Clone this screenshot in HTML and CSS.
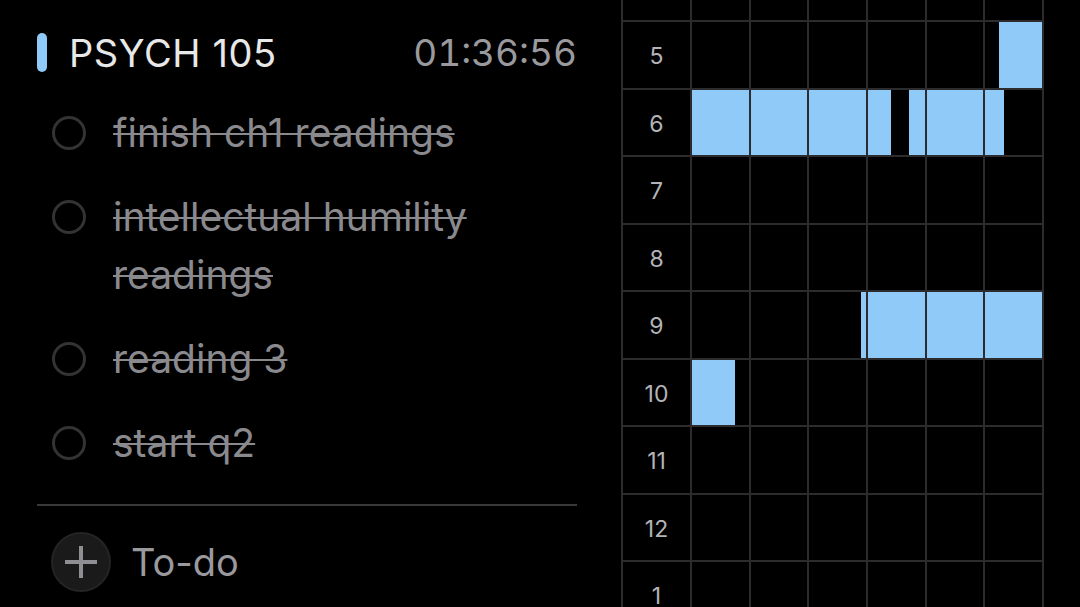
FILE: index.html
```
<!DOCTYPE html>
<html lang="en">
<head>
    <meta charset="UTF-8">
    <meta name="viewport" content="width=device-width, initial-scale=1.0">
    <title>PSYCH 105</title>
    <link rel="stylesheet" href="styles.css">
</head>
<body>
    <div class="app">
        <section class="tasks">
            <div class="task-head">
                <span class="pill"></span>
                <h1 class="title">PSYCH 105</h1>
                <span class="timer">01:36:56</span>
            </div>

            <ul class="todo-list">
                <li class="todo">
                    <span class="check"></span>
                    <span class="todo-text">finish ch1 readings</span>
                </li>
                <li class="todo">
                    <span class="check"></span>
                    <span class="todo-text">intellectual humility readings</span>
                </li>
                <li class="todo">
                    <span class="check"></span>
                    <span class="todo-text">reading 3</span>
                </li>
                <li class="todo">
                    <span class="check"></span>
                    <span class="todo-text">start q2</span>
                </li>
            </ul>

            <div class="divider"></div>

            <div class="add-todo">
                <span class="add-btn">
                    <svg width="34" height="34" viewBox="0 0 34 34">
                        <path d="M17 1v32M1 17h32" stroke="#8e8e93" stroke-width="4" fill="none"/>
                    </svg>
                </span>
                <span class="add-label">To-do</span>
            </div>
        </section>

        <section class="timeline">
            <div class="hour">
                <div class="hour-label">4</div>
                <div class="hour-track">
                    <div class="cells"><span></span><span></span><span></span><span></span><span></span><span></span></div>
                </div>
            </div>
            <div class="hour">
                <div class="hour-label">5</div>
                <div class="hour-track">
                    <div class="seg" style="left: 309px; width: 43px;"></div>
                    <div class="cells"><span></span><span></span><span></span><span></span><span></span><span></span></div>
                </div>
            </div>
            <div class="hour">
                <div class="hour-label">6</div>
                <div class="hour-track">
                    <div class="seg" style="left: 2px; width: 199px;"></div>
                    <div class="seg" style="left: 219px; width: 95px;"></div>
                    <div class="cells"><span></span><span></span><span></span><span></span><span></span><span></span></div>
                </div>
            </div>
            <div class="hour">
                <div class="hour-label">7</div>
                <div class="hour-track">
                    <div class="cells"><span></span><span></span><span></span><span></span><span></span><span></span></div>
                </div>
            </div>
            <div class="hour">
                <div class="hour-label">8</div>
                <div class="hour-track">
                    <div class="cells"><span></span><span></span><span></span><span></span><span></span><span></span></div>
                </div>
            </div>
            <div class="hour">
                <div class="hour-label">9</div>
                <div class="hour-track">
                    <div class="seg" style="left: 171px; width: 181px;"></div>
                    <div class="cells"><span></span><span></span><span></span><span></span><span></span><span></span></div>
                </div>
            </div>
            <div class="hour">
                <div class="hour-label">10</div>
                <div class="hour-track">
                    <div class="seg" style="left: 2px; width: 43px;"></div>
                    <div class="cells"><span></span><span></span><span></span><span></span><span></span><span></span></div>
                </div>
            </div>
            <div class="hour">
                <div class="hour-label">11</div>
                <div class="hour-track">
                    <div class="cells"><span></span><span></span><span></span><span></span><span></span><span></span></div>
                </div>
            </div>
            <div class="hour">
                <div class="hour-label">12</div>
                <div class="hour-track">
                    <div class="cells"><span></span><span></span><span></span><span></span><span></span><span></span></div>
                </div>
            </div>
            <div class="hour">
                <div class="hour-label">1</div>
                <div class="hour-track">
                    <div class="cells"><span></span><span></span><span></span><span></span><span></span><span></span></div>
                </div>
            </div>
        </section>
    </div>
</body>
</html>
```

FILE: styles.css
```
body {
    margin: 0;
    background-color: #000;
    font-family: Inter, 'Noto Sans', sans-serif;
    color: #e5e5e5;
}
.app {
    display: flex;
    gap: 44px;
    height: 607px;
    padding-left: 37px;
    overflow: hidden;
}
.tasks {
    width: 540px;
    flex-shrink: 0;
    padding-top: 33px;
}
.task-head {
    display: flex;
    align-items: center;
    height: 39px;
}
.pill {
    width: 10px;
    height: 39px;
    border-radius: 5px;
    background-color: #90caf9;
    margin-right: 22px;
}
.title {
    margin: 0;
    font-size: 38px;
    font-weight: 400;
    letter-spacing: 0.6px;
    color: #e8e8e8;
}
.timer {
    margin-left: auto;
    font-size: 37px;
    color: #9a9a9e;
    font-variant-numeric: tabular-nums;
}
.todo-list {
    list-style: none;
    margin: 32px 0 0;
    padding: 0 0 0 15px;
    display: flex;
    flex-direction: column;
    gap: 26px;
}
.todo {
    display: flex;
    align-items: flex-start;
    gap: 27px;
}
.check {
    flex-shrink: 0;
    width: 34px;
    height: 34px;
    margin-top: 12px;
    box-sizing: border-box;
    border: 3px solid #333;
    border-radius: 50%;
}
.todo-text {
    font-size: 39px;
    line-height: 58px;
    color: #8a8a8e;
    text-decoration: line-through;
    text-decoration-thickness: 2px;
}
.divider {
    height: 2px;
    margin-top: 32px;
    background-color: #38383a;
}
.add-todo {
    display: flex;
    align-items: center;
    gap: 20px;
    margin-top: 26px;
    padding-left: 14px;
}
.add-btn {
    width: 60px;
    height: 60px;
    box-sizing: border-box;
    border: 2px solid #242426;
    border-radius: 50%;
    background-color: #1a1a1a;
    display: flex;
    align-items: center;
    justify-content: center;
}
.add-label {
    font-size: 38px;
    color: #9a9a9e;
}
.timeline {
    width: 423px;
    flex-shrink: 0;
    margin-top: -47.5px;
}
.hour {
    display: flex;
    height: 67.5px;
    box-sizing: border-box;
    border-top: 2px solid #2c2c2e;
}
.hour-label {
    width: 69px;
    box-sizing: border-box;
    border-left: 2px solid #2c2c2e;
    display: flex;
    align-items: center;
    justify-content: center;
    padding-top: 3px;
    font-size: 23px;
    color: #b4b4b8;
}
.hour-track {
    position: relative;
    flex: 1;
    border-right: 2px solid #2c2c2e;
}
.seg {
    position: absolute;
    top: 0;
    bottom: 0;
    background-color: #90caf9;
}
.cells {
    position: absolute;
    inset: 0;
    display: grid;
    grid-template-columns: repeat(6, 1fr);
}
.cells span {
    border-left: 2px solid #2c2c2e;
}
```
